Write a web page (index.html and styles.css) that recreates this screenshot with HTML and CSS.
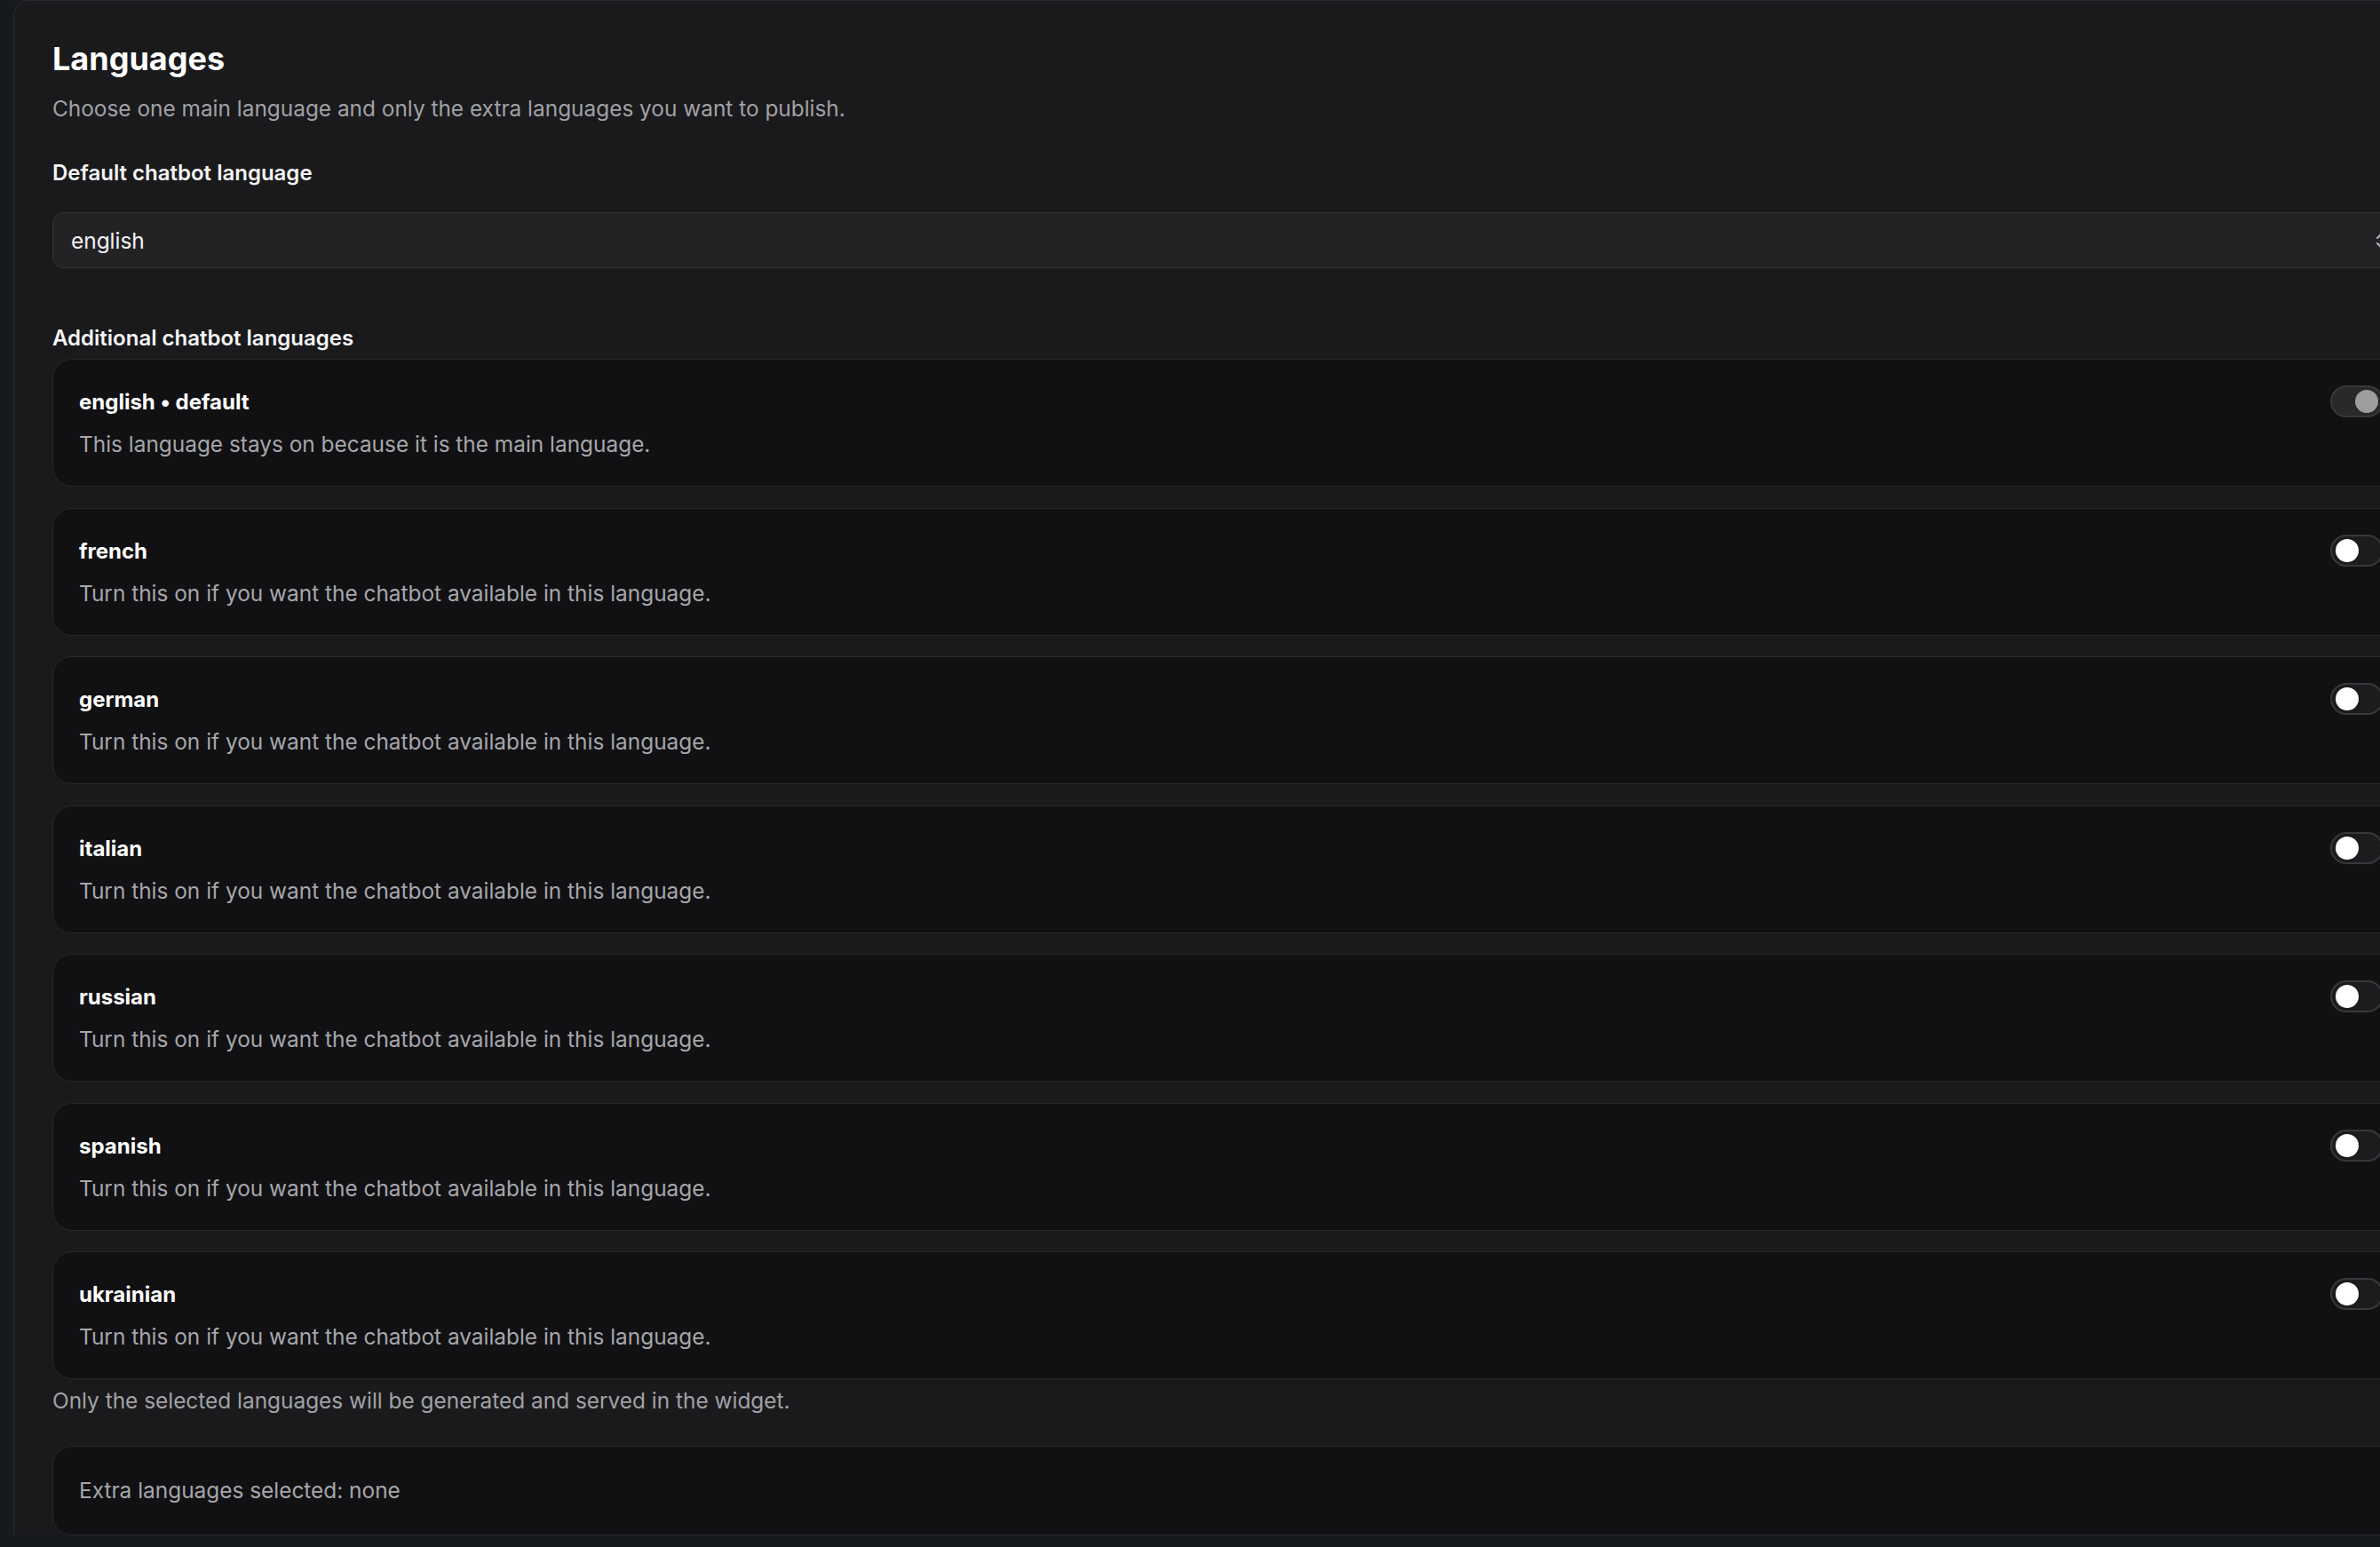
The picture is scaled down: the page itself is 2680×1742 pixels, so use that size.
FILE: index.html
```html
<!doctype html>
<html lang="en">
  <head>
    <meta charset="UTF-8" />
    <meta name="viewport" content="width=device-width, initial-scale=1.0" />
    <title>Languages</title>
    <link rel="stylesheet" href="styles.css">
  </head>
  <body>
    <main class="panel">
      <h1 class="title">Languages</h1>
      <p class="subtitle">Choose one main language and only the extra languages you want to publish.</p>

      <div class="field-label">Default chatbot language</div>
      <div class="select">
        <span>english</span>
        <svg class="select-icon" width="24" height="24" viewBox="0 0 24 24" fill="none" stroke="currentColor" stroke-width="2" stroke-linecap="round" stroke-linejoin="round">
          <path d="m7 15 5 5 5-5" />
          <path d="m7 9 5-5 5 5" />
        </svg>
      </div>

      <div class="field-label section-label">Additional chatbot languages</div>
      <ul class="lang-list">
        <li class="lang-card">
          <div>
            <div class="lang-name">english • default</div>
            <div class="lang-desc">This language stays on because it is the main language.</div>
          </div>
          <span class="toggle on disabled"><span class="knob"></span></span>
        </li>
        <li class="lang-card">
          <div>
            <div class="lang-name">french</div>
            <div class="lang-desc">Turn this on if you want the chatbot available in this language.</div>
          </div>
          <span class="toggle"><span class="knob"></span></span>
        </li>
        <li class="lang-card">
          <div>
            <div class="lang-name">german</div>
            <div class="lang-desc">Turn this on if you want the chatbot available in this language.</div>
          </div>
          <span class="toggle"><span class="knob"></span></span>
        </li>
        <li class="lang-card">
          <div>
            <div class="lang-name">italian</div>
            <div class="lang-desc">Turn this on if you want the chatbot available in this language.</div>
          </div>
          <span class="toggle"><span class="knob"></span></span>
        </li>
        <li class="lang-card">
          <div>
            <div class="lang-name">russian</div>
            <div class="lang-desc">Turn this on if you want the chatbot available in this language.</div>
          </div>
          <span class="toggle"><span class="knob"></span></span>
        </li>
        <li class="lang-card">
          <div>
            <div class="lang-name">spanish</div>
            <div class="lang-desc">Turn this on if you want the chatbot available in this language.</div>
          </div>
          <span class="toggle"><span class="knob"></span></span>
        </li>
        <li class="lang-card">
          <div>
            <div class="lang-name">ukrainian</div>
            <div class="lang-desc">Turn this on if you want the chatbot available in this language.</div>
          </div>
          <span class="toggle"><span class="knob"></span></span>
        </li>
      </ul>

      <p class="hint">Only the selected languages will be generated and served in the widget.</p>

      <div class="summary">Extra languages selected: none</div>
    </main>
  </body>
</html>
```

FILE: styles.css
```css
body {
  margin: 0;
  padding-left: 15px;
  height: 1742px;
  overflow: hidden;
  background: #16191e;
  font-family: Inter, 'Noto Sans', sans-serif;
  color: #f4f4f5;
}
.panel {
  box-sizing: border-box;
  width: 2745px;
  padding: 43px 44px 0 43px;
  background: #1a1a1c;
  border: 1px solid #2a2b2e;
  border-bottom: none;
  border-radius: 18px 18px 0 0;
}
.title {
  margin: 0;
  font-size: 36px;
  line-height: 44px;
  font-weight: 700;
  color: #fff;
}
.subtitle {
  margin: 16px 0 0;
  font-size: 24.4px;
  line-height: 36px;
  color: #a1a1a6;
}
.field-label {
  margin-top: 37px;
  font-size: 24px;
  line-height: 36px;
  font-weight: 600;
  color: #f4f4f5;
}
.section-label {
  margin-top: 61px;
}
.select {
  box-sizing: border-box;
  height: 63px;
  margin-top: 26px;
  padding: 0 20px;
  display: flex;
  align-items: center;
  justify-content: space-between;
  background: #232325;
  border: 1px solid #333336;
  border-radius: 12px;
  font-size: 24.4px;
  line-height: 36px;
  color: #f4f4f5;
}
.select-icon {
  color: #b8b8bc;
}
.lang-list {
  list-style: none;
  margin: 5px 0 0;
  padding: 0;
  display: flex;
  flex-direction: column;
  gap: 23.5px;
}
.lang-card {
  box-sizing: border-box;
  height: 144px;
  padding: 32px 30px 29px 29px;
  display: flex;
  justify-content: space-between;
  align-items: flex-start;
  background: #111113;
  border: 1px solid #27272a;
  border-radius: 22px;
}
.lang-name {
  font-size: 24px;
  line-height: 32px;
  font-weight: 700;
  color: #fff;
}
.lang-desc {
  margin-top: 13px;
  font-size: 24.4px;
  line-height: 36px;
  color: #a6a6ab;
}
.toggle {
  box-sizing: border-box;
  width: 60px;
  height: 36px;
  margin-top: -3px;
  padding: 3px 4px;
  display: flex;
  align-items: center;
  background: #1c1c1e;
  border: 2px solid #38383b;
  border-radius: 18px;
}
.knob {
  width: 26px;
  height: 26px;
  border-radius: 50%;
  background: #fff;
}
.toggle.on {
  justify-content: flex-end;
  background: #29292c;
}
.toggle.disabled .knob {
  background: #9d9d9f;
}
.hint {
  margin: 6px 0 0;
  font-size: 24.4px;
  line-height: 36px;
  color: #a1a1a6;
}
.summary {
  box-sizing: border-box;
  height: 101px;
  margin-top: 33px;
  padding: 31px 29px 0;
  background: #111113;
  border: 1px solid #27272a;
  border-radius: 22px;
  font-size: 24.4px;
  line-height: 36px;
  color: #a6a6ab;
}
```
